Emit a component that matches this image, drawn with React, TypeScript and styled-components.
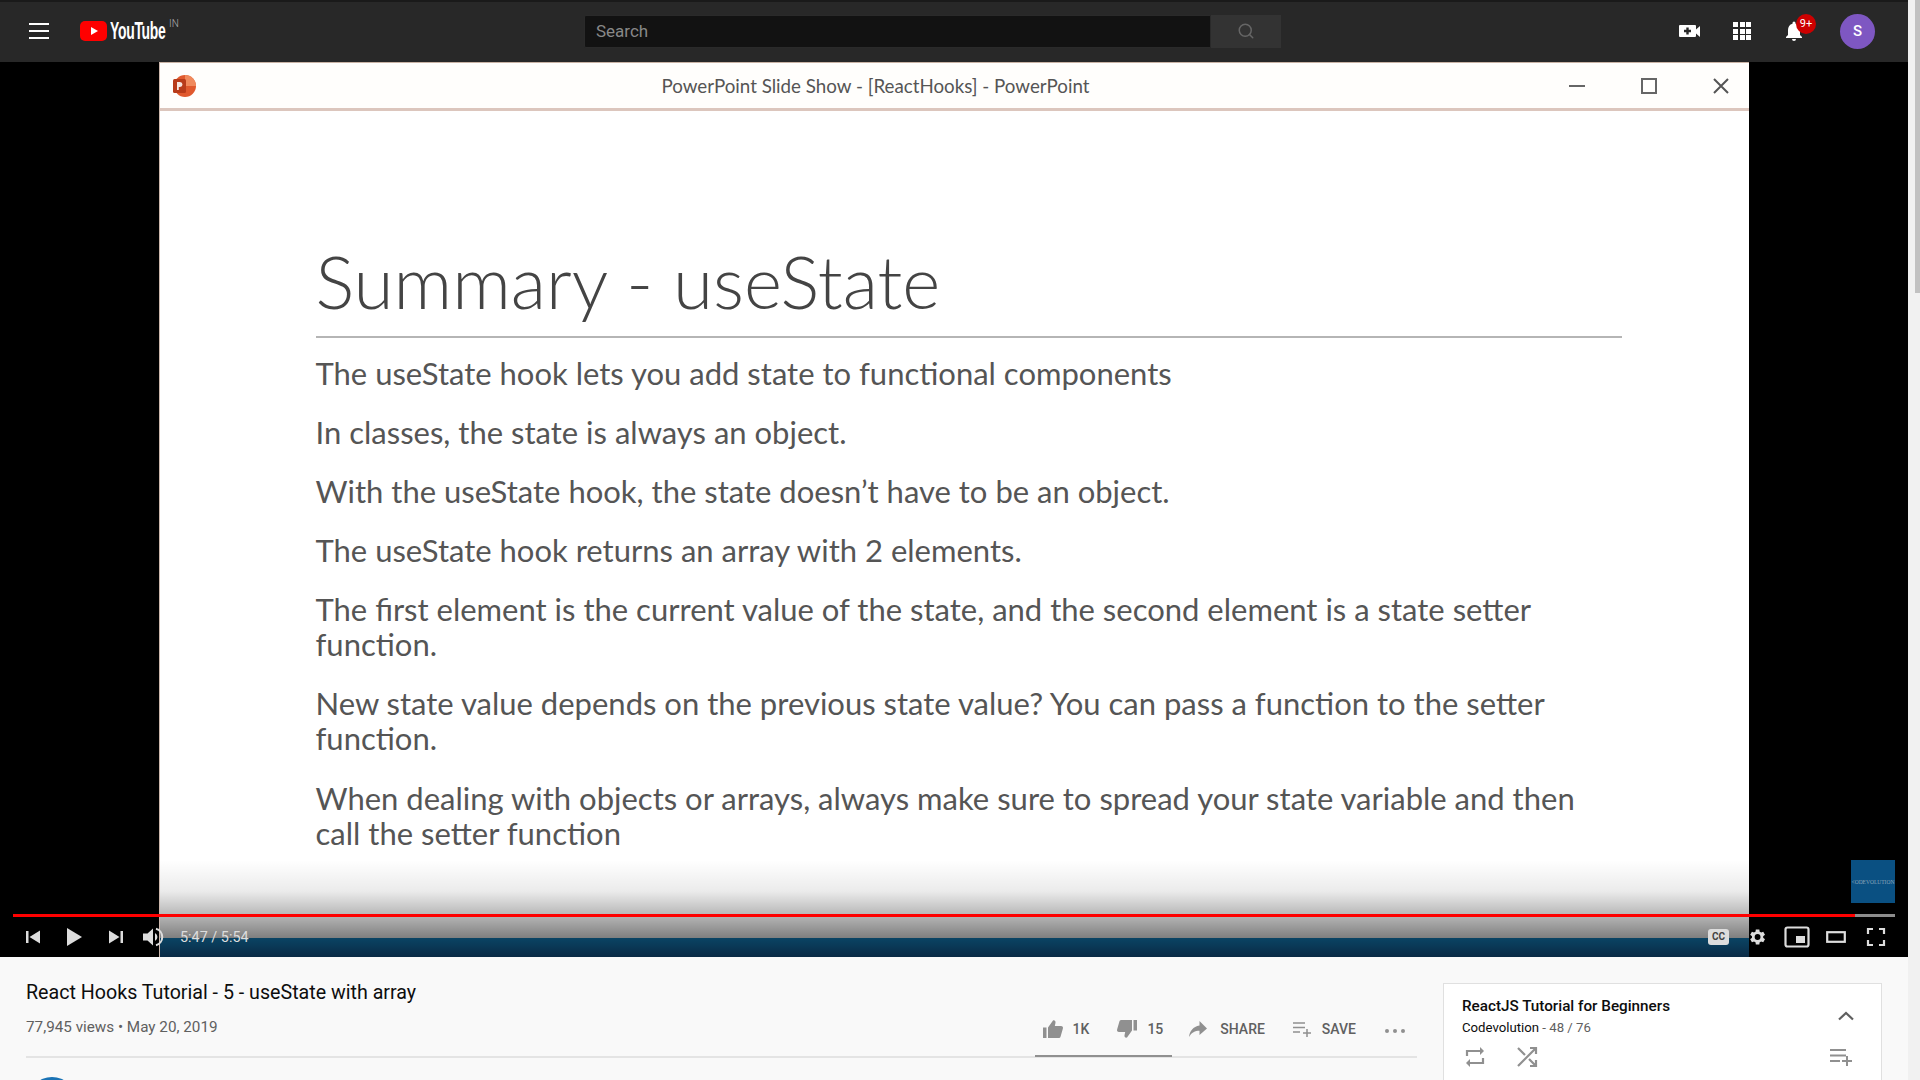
import styled, { createGlobalStyle } from "styled-components";
import { Search } from "lucide-react";

const GlobalStyle = createGlobalStyle`
  *, *::before, *::after { box-sizing: border-box; }
  html, body {
    margin: 0;
    padding: 0;
    height: 100%;
    overflow: hidden;
    background: #f9f9f9;
    font-family: Roboto, "Liberation Sans", sans-serif;
  }
  #root { height: 100%; }
`;

const slideLines = [
  ["The useState hook lets you add state to functional components"],
  ["In classes, the state is always an object."],
  ["With the useState hook, the state doesn’t have to be an object."],
  ["The useState hook returns an array with 2 elements."],
  ["The first element is the current value of the state, and the second element is a state setter", "function."],
  ["New state value depends on the previous state value? You can pass a function to the setter", "function."],
  ["When dealing with objects or arrays, always make sure to spread your state variable and then", "call the setter function"],
];

const App = () => {
  return (
    <Page>
      <GlobalStyle />
      <Main>
        <Masthead>
          <MastLeft>
            <svg width="20" height="16" viewBox="0 0 20 16">
              <path d="M0 1h20M0 8h20M0 15h20" stroke="#fff" strokeWidth="2" />
            </svg>
            <Logo>
              <svg width="27" height="20" viewBox="0 0 27 20">
                <rect width="27" height="20" rx="5" fill="#f00" />
                <path d="M11 6l7 4-7 4z" fill="#fff" />
              </svg>
              <LogoText>YouTube</LogoText>
              <LogoRegion>IN</LogoRegion>
            </Logo>
          </MastLeft>
          <SearchBox>
            <SearchInput>Search</SearchInput>
            <SearchButton>
              <Search size={18} color="#666" />
            </SearchButton>
          </SearchBox>
          <MastRight>
            <svg width="24" height="24" viewBox="0 0 24 24">
              <path d="M2 6h15a1 1 0 0 1 1 1v3.500l4-3.500v11l-4-3.500V17a1 1 0 0 1-1 1H2a1 1 0 0 1-1-1V7a1 1 0 0 1 1-1z" fill="#fff" />
              <path d="M9.500 8.500v7M6 12h7" stroke="#282828" strokeWidth="2.400" />
            </svg>
            <AppsGrid>
              {Array.from({ length: 9 }).map((_, i) => (
                <AppsDot key={i} />
              ))}
            </AppsGrid>
            <BellWrap>
              <svg width="24" height="24" viewBox="0 0 24 24">
                <path d="M12 22a2 2 0 0 0 2-2h-4a2 2 0 0 0 2 2zm6-6v-5c0-3-1.600-5.600-4.500-6.300V4a1.500 1.500 0 0 0-3 0v.7C7.600 5.400 6 8 6 11v5l-2 2v1h16v-1z" fill="#fff" />
              </svg>
              <BellBadge>9+</BellBadge>
            </BellWrap>
            <Avatar>S</Avatar>
          </MastRight>
        </Masthead>

        <Player>
          <Slide>
            <WindowBar>
              <PptIcon>
                <svg width="26" height="26" viewBox="0 0 26 26">
                  <circle cx="14" cy="13" r="11" fill="#e0592e" />
                  <path d="M14 2a11 11 0 0 1 11 11H14z" fill="#f08a5d" />
                  <rect x="2" y="6" width="13" height="14" rx="1.500" fill="#b83b1a" />
                  <path d="M6 17V9h3a2.500 2.500 0 0 1 0 5H7.800v3z" fill="#f6e5df" />
                </svg>
              </PptIcon>
              <WindowTitle>PowerPoint Slide Show - [ReactHooks] - PowerPoint</WindowTitle>
              <WindowControls>
                <svg width="18" height="18" viewBox="0 0 18 18">
                  <path d="M1 9h16" stroke="#666" strokeWidth="2" />
                </svg>
                <svg width="18" height="18" viewBox="0 0 18 18">
                  <rect x="2" y="2" width="14" height="14" fill="none" stroke="#666" strokeWidth="2" />
                </svg>
                <svg width="18" height="18" viewBox="0 0 18 18">
                  <path d="M2 2l14 14M16 2L2 16" stroke="#555" strokeWidth="2" />
                </svg>
              </WindowControls>
            </WindowBar>
            <SlideBody>
              <SlideTitle>Summary - useState</SlideTitle>
              <SlideRule />
              <SlideList>
                {slideLines.map((lines) => (
                  <SlidePara key={lines[0]}>
                    {lines.map((line) => (
                      <SlideLine key={line}>{line}</SlideLine>
                    ))}
                  </SlidePara>
                ))}
              </SlideList>
            </SlideBody>
            <SlideShade />
            <SlideFooter />
          </Slide>

          <Watermark>
            <WatermarkText>&lt;ODEVOLUTION</WatermarkText>
          </Watermark>

          <Controls>
            <ProgressTrack>
              <ProgressFill style={{ width: `${(1842 / 1882) * 100}%` }} />
            </ProgressTrack>
            <ControlRow>
              <ControlGroup>
                <svg width="16" height="16" viewBox="0 0 16 16">
                  <path d="M1 2h2.500v12H1zM15 1.500v13L4.500 8z" fill="#ddd" />
                </svg>
                <PlayButton>
                  <svg width="18" height="20" viewBox="0 0 18 20">
                    <path d="M2 1l15 9-15 9z" fill="#ddd" />
                  </svg>
                </PlayButton>
                <svg width="16" height="16" viewBox="0 0 16 16">
                  <path d="M1 1.500v13L11.500 8zM12.500 2H15v12h-2.500z" fill="#ddd" />
                </svg>
                <VolumeButton>
                  <svg width="22" height="22" viewBox="0 0 22 22">
                    <path d="M1 7.500h4.500L11 2.500v17l-5.500-5H1z" fill="#ddd" />
                    <path d="M13 7a4.500 4.500 0 0 1 0 8z" fill="#ddd" />
                    <path d="M14 2.800a8.500 8.500 0 0 1 0 16.400" fill="none" stroke="#ddd" strokeWidth="2" />
                  </svg>
                </VolumeButton>
                <TimeText>5:47 / 5:54</TimeText>
              </ControlGroup>
              <RightControls>
                <CcBadge>CC</CcBadge>
                <svg width="20" height="20" viewBox="0 0 24 24">
                  <path
                    fill="#ddd"
                    fillRule="evenodd"
                    d="M19.400 13a7.500 7.500 0 0 0 0-2l2.200-1.700-2.100-3.600-2.600 1a7.500 7.500 0 0 0-1.700-1L14.800 3h-4.200l-.4 2.700a7.500 7.500 0 0 0-1.700 1l-2.600-1-2.100 3.600L6 11a7.500 7.500 0 0 0 0 2l-2.200 1.700 2.100 3.600 2.600-1a7.500 7.500 0 0 0 1.700 1l.4 2.700h4.200l.4-2.700a7.500 7.500 0 0 0 1.700-1l2.600 1 2.100-3.600zM12.700 15.500a3.500 3.500 0 1 1 0-7 3.500 3.500 0 0 1 0 7z"
                  />
                </svg>
                <PipIcon width="26" height="22" viewBox="0 0 26 22">
                  <rect x="1.500" y="1.500" width="23" height="19" rx="2" fill="none" stroke="#ddd" strokeWidth="2.200" />
                  <rect x="12" y="10" width="9" height="7" fill="#ddd" />
                </PipIcon>
                <TheaterIcon width="20" height="14" viewBox="0 0 20 14">
                  <rect x="1.200" y="2.200" width="17.600" height="9.600" fill="none" stroke="#ddd" strokeWidth="2.200" />
                </TheaterIcon>
                <svg width="20" height="20" viewBox="0 0 20 20">
                  <path d="M2 7V2h5M13 2h5v5M18 13v5h-5M7 18H2v-5" fill="none" stroke="#ddd" strokeWidth="2.200" />
                </svg>
              </RightControls>
            </ControlRow>
          </Controls>
        </Player>

        <Below>
          <Primary>
            <VideoTitle>React Hooks Tutorial - 5 - useState with array</VideoTitle>
            <InfoRow>
              <Views>77,945 views • May 20, 2019</Views>
              <Actions>
                <LikeGroup>
                  <ActionItem $gap={9}>
                    <svg width="22" height="22" viewBox="0 0 22 22">
                      <path d="M1 9.500h3.500V20H1zM6 20V9.500l5-7c1.500-.5 2.800.5 2.500 2.200L12.800 8H19c1.500 0 2.300 1.200 1.900 2.500l-2.300 8c-.3 1-1 1.500-2 1.500z" fill="#909090" />
                    </svg>
                    <ActionLabel>1K</ActionLabel>
                  </ActionItem>
                  <ActionItem $gap={9}>
                    <svg width="22" height="22" viewBox="0 0 22 22">
                      <path d="M21 12.500h-3.500V2H21zM16 2v10.500l-5 7c-1.500.5-2.800-.5-2.500-2.200L9.200 14H3c-1.500 0-2.300-1.200-1.900-2.500l2.300-8c.3-1 1-1.500 2-1.500z" fill="#909090" />
                    </svg>
                    <ActionLabel>15</ActionLabel>
                  </ActionItem>
                </LikeGroup>
                <ActionItem $gap={12}>
                  <svg width="20" height="18" viewBox="0 0 20 18">
                    <path d="M11.500 1L19 8.500 11.500 15v-4.200C7 10.800 3.500 12.500 1 17c.8-6 4-10.500 10.500-11.500z" fill="#909090" />
                  </svg>
                  <ActionLabel>SHARE</ActionLabel>
                </ActionItem>
                <SaveItem $gap={10}>
                  <svg width="20" height="18" viewBox="0 0 20 18">
                    <path d="M1 3h12M1 7.500h12M1 12h7M15 9v8M11 13h8" stroke="#909090" strokeWidth="1.500" fill="none" />
                  </svg>
                  <ActionLabel>SAVE</ActionLabel>
                </SaveItem>
                <MoreDots>
                  <MoreDot />
                  <MoreDot />
                  <MoreDot />
                </MoreDots>
              </Actions>
            </InfoRow>
            <ChannelAvatar />
          </Primary>

          <PlaylistCard>
            <PlaylistTop>
              <div>
                <PlaylistTitle>ReactJS Tutorial for Beginners</PlaylistTitle>
                <PlaylistMeta>
                  Codevolution <PlaylistCount>- 48 / 76</PlaylistCount>
                </PlaylistMeta>
              </div>
              <ChevronIcon width="18" height="10" viewBox="0 0 18 10">
                <path d="M2 8.500l7-6.500 7 6.500" fill="none" stroke="#606060" strokeWidth="2.200" />
              </ChevronIcon>
            </PlaylistTop>
            <PlaylistActions>
              <PlaylistToggles>
                <svg width="22" height="24" viewBox="0 0 22 24">
                  <path d="M3 11V6h14M19 13v5H5" fill="none" stroke="#909090" strokeWidth="2.200" />
                  <path d="M16 2l4 4-4 4zM6 14l-4 4 4 4z" fill="#909090" />
                </svg>
                <svg width="22" height="22" viewBox="0 0 22 22">
                  <path d="M2 2l7 7M13 13l6 6M2 20L19 3M14 2h6v6M14 20h6v-6" fill="none" stroke="#909090" strokeWidth="2.200" />
                </svg>
              </PlaylistToggles>
              <svg width="24" height="20" viewBox="0 0 24 20">
                <path d="M1 3h16M1 8.500h16M1 14h10M18 9v10M13 14h10" fill="none" stroke="#909090" strokeWidth="2" />
              </svg>
            </PlaylistActions>
          </PlaylistCard>
        </Below>
      </Main>
      <ScrollTrack>
        <ScrollThumb />
      </ScrollTrack>
    </Page>
  );
};

export default App;

const Page = styled.div`
  display: flex;
  height: 100vh;
  overflow: hidden;
`;

const Main = styled.div`
  flex: 1;
  min-width: 0;
  display: flex;
  flex-direction: column;
`;

const ScrollTrack = styled.div`
  width: 12px;
  padding-left: 7px;
  background: #f1f1f1;
`;

const ScrollThumb = styled.div`
  height: 293px;
  background: #c1c1c1;
`;

const Masthead = styled.header`
  height: 62px;
  flex: none;
  border-top: 2px solid #1a1a1a;
  background: #282828;
  display: flex;
  align-items: center;
  padding: 0 33px 2px 29px;
`;

const MastLeft = styled.div`
  display: flex;
  align-items: center;
  gap: 31px;
  width: 555px;
`;

const Logo = styled.div`
  display: flex;
  align-items: center;
  gap: 3px;
  position: relative;
`;

const LogoText = styled.span`
  font-family: "Liberation Sans", sans-serif;
  font-size: 24px;
  line-height: 20px;
  font-weight: 700;
  letter-spacing: -0.5px;
  color: #fff;
  transform: scaleX(0.58);
  transform-origin: left center;
`;

const LogoRegion = styled.span`
  position: absolute;
  left: 89px;
  top: -3px;
  font-size: 10px;
  font-weight: 300;
  color: #aaa;
`;

const SearchBox = styled.div`
  display: flex;
  width: 697px;
  height: 33px;
`;

const SearchInput = styled.div`
  flex: 1;
  background: #121212;
  border: 1px solid #2a2a2a;
  border-radius: 2px 0 0 2px;
  color: #888;
  font-size: 17px;
  line-height: 31px;
  padding-left: 11px;
`;

const SearchButton = styled.div`
  width: 70px;
  background: #333;
  display: flex;
  align-items: center;
  justify-content: center;
`;

const MastRight = styled.div`
  margin-left: auto;
  display: flex;
  align-items: center;
  gap: 31px;
`;

const AppsGrid = styled.div`
  display: grid;
  grid-template-columns: repeat(3, 5px);
  grid-auto-rows: 5px;
  gap: 1.5px;
`;

const AppsDot = styled.span`
  background: #fff;
`;

const BellWrap = styled.div`
  position: relative;
  display: flex;
`;

const BellBadge = styled.span`
  position: absolute;
  top: -5px;
  right: -10px;
  width: 20px;
  height: 20px;
  border-radius: 50%;
  background: #cc0000;
  color: #fff;
  font-size: 11px;
  line-height: 20px;
  text-align: center;
`;

const Avatar = styled.div`
  width: 35px;
  height: 35px;
  margin-left: 3px;
  border-radius: 50%;
  background: #7e57c2;
  color: #fff;
  font-size: 15px;
  font-weight: 500;
  line-height: 35px;
  text-align: center;
`;

const Player = styled.section`
  height: 895px;
  flex: none;
  background: #000;
  position: relative;
  display: flex;
  justify-content: center;
  padding-right: 1px;
  overflow: hidden;
`;

const Slide = styled.div`
  width: 1590px;
  background: #fff;
  position: relative;
  display: flex;
  flex-direction: column;
  border-left: 1px solid #cbb7ad;
`;

const WindowBar = styled.div`
  height: 49px;
  border-top: 1px solid #c9b3a5;
  border-bottom: 3px solid #dcc6bd;
  background: #fffefc;
  display: flex;
  align-items: center;
  position: relative;
  padding: 0 19px 0 11px;
`;

const PptIcon = styled.div`
  display: flex;
`;

const WindowTitle = styled.div`
  position: absolute;
  left: 502px;
  font-family: Lato, sans-serif;
  font-size: 18.75px;
  color: #555;
  white-space: nowrap;
`;

const WindowControls = styled.div`
  margin-left: auto;
  display: flex;
  gap: 54px;
`;

const SlideBody = styled.div`
  padding: 128px 127px 0 156px;
`;

const SlideTitle = styled.h1`
  margin: 0;
  font-family: Lato, sans-serif;
  font-weight: 300;
  font-size: 72.8px;
  line-height: 84px;
  color: #444;
`;

const SlideRule = styled.div`
  height: 2px;
  background: #b5b5b5;
  margin-top: 13px;
`;

const SlideList = styled.div`
  margin-top: 18px;
  display: flex;
  flex-direction: column;
  gap: 24.1px;
`;

const SlidePara = styled.div`
  display: flex;
  flex-direction: column;
`;

const SlideLine = styled.div`
  font-family: Lato, sans-serif;
  font-size: 31px;
  line-height: 35px;
  color: #555;
  white-space: nowrap;
`;

const SlideShade = styled.div`
  position: absolute;
  left: 0;
  right: 0;
  bottom: 19px;
  height: 78px;
  background: linear-gradient(
    to bottom,
    rgba(0, 0, 0, 0),
    rgba(0, 0, 0, 0.08) 40%,
    rgba(0, 0, 0, 0.28) 70%,
    rgba(0, 0, 0, 0.5)
  );
`;

const SlideFooter = styled.div`
  position: absolute;
  left: 0;
  right: 0;
  bottom: 0;
  height: 19px;
  background: linear-gradient(to bottom, #0a4464, #0a2a45);
`;

const Watermark = styled.div`
  position: absolute;
  right: 13px;
  top: 798px;
  width: 44px;
  height: 43px;
  background: #0a5082;
  display: flex;
  align-items: center;
  justify-content: center;
  overflow: hidden;
`;

const WatermarkText = styled.span`
  font-family: "Liberation Serif", serif;
  font-size: 5.5px;
  color: #8aa6bb;
`;

const Controls = styled.div`
  position: absolute;
  left: 13px;
  right: 13px;
  bottom: 0;
  display: flex;
  flex-direction: column;
`;

const ProgressTrack = styled.div`
  height: 3px;
  background: #8c8c8c;
`;

const ProgressFill = styled.div`
  height: 100%;
  background: #f00;
`;

const ControlRow = styled.div`
  height: 40px;
  display: flex;
  align-items: center;
  justify-content: space-between;
`;

const ControlGroup = styled.div`
  display: flex;
  align-items: center;
  gap: 24px;
  padding-left: 12px;
`;

const PlayButton = styled.div`
  display: flex;
  margin-right: 1px;
`;

const VolumeButton = styled.div`
  display: flex;
  margin-left: -6px;
`;

const TimeText = styled.span`
  font-size: 14.4px;
  color: #ddd;
  margin-left: -8px;
`;

const RightControls = styled.div`
  display: flex;
  align-items: center;
  gap: 18px;
  padding-right: 9px;
`;

const PipIcon = styled.svg`
  margin-left: -1px;
`;

const TheaterIcon = styled.svg`
  margin: 0 2px 0 -2px;
`;

const CcBadge = styled.span`
  width: 21px;
  height: 16px;
  border-radius: 3px;
  background: #ddd;
  color: #444;
  font-size: 10px;
  font-weight: 700;
  line-height: 16px;
  text-align: center;
`;

const Below = styled.div`
  flex: 1;
  display: flex;
  padding: 0 26px;
  gap: 26px;
  background: #f9f9f9;
  overflow: hidden;
`;

const Primary = styled.div`
  width: 1391px;
  flex: none;
  padding-top: 23px;
`;

const VideoTitle = styled.h2`
  margin: 0;
  font-size: 19.65px;
  font-weight: 400;
  line-height: 26px;
  color: #0d0d0d;
`;

const InfoRow = styled.div`
  height: 52px;
  display: flex;
  justify-content: space-between;
  align-items: flex-start;
  border-bottom: 2px solid #e4e4e4;
`;

const Views = styled.span`
  margin-top: 11px;
  font-size: 15.25px;
  line-height: 20px;
  color: #606060;
`;

const Actions = styled.div`
  display: flex;
  align-items: flex-start;
  gap: 28px;
  margin-top: 11px;
  padding-right: 12px;
`;

const LikeGroup = styled.div`
  display: flex;
  gap: 27px;
  padding: 0 9px 0 7px;
  margin-right: -12px;
  height: 40px;
  align-items: flex-start;
  border-bottom: 2px solid #909090;
`;

const ActionItem = styled.div<{ $gap: number }>`
  display: flex;
  align-items: center;
  gap: ${(p) => p.$gap}px;
  height: 24px;
`;

const SaveItem = styled(ActionItem)`
  margin-left: -1px;
`;

const ActionLabel = styled.span`
  font-size: 14px;
  font-weight: 500;
  color: #606060;
`;

const MoreDots = styled.div`
  display: flex;
  gap: 4px;
  margin: 12px 0 0 1px;
`;

const MoreDot = styled.span`
  width: 4px;
  height: 4px;
  border-radius: 50%;
  background: #909090;
`;

const ChannelAvatar = styled.div`
  width: 48px;
  height: 48px;
  border-radius: 50%;
  margin: 19px 0 0 2px;
  background: #1a73b5;
`;

const PlaylistCard = styled.aside`
  width: 439px;
  height: 120px;
  flex: none;
  margin-top: 26px;
  background: #fff;
  border: 1px solid #e0e0e0;
  padding: 12px 26px 0 18px;
`;

const PlaylistTop = styled.div`
  display: flex;
  justify-content: space-between;
  align-items: center;
`;

const ChevronIcon = styled.svg`
  margin-bottom: 3px;
`;

const PlaylistTitle = styled.div`
  font-size: 15.25px;
  font-weight: 500;
  line-height: 20px;
  color: #0d0d0d;
`;

const PlaylistMeta = styled.div`
  font-size: 13.2px;
  line-height: 20px;
  margin-top: 2px;
  color: #0d0d0d;
`;

const PlaylistCount = styled.span`
  color: #606060;
`;

const PlaylistActions = styled.div`
  display: flex;
  justify-content: space-between;
  align-items: center;
  margin-top: 7px;
  padding: 0 2px 0 2px;
`;

const PlaylistToggles = styled.div`
  display: flex;
  gap: 30px;
  align-items: center;
`;
